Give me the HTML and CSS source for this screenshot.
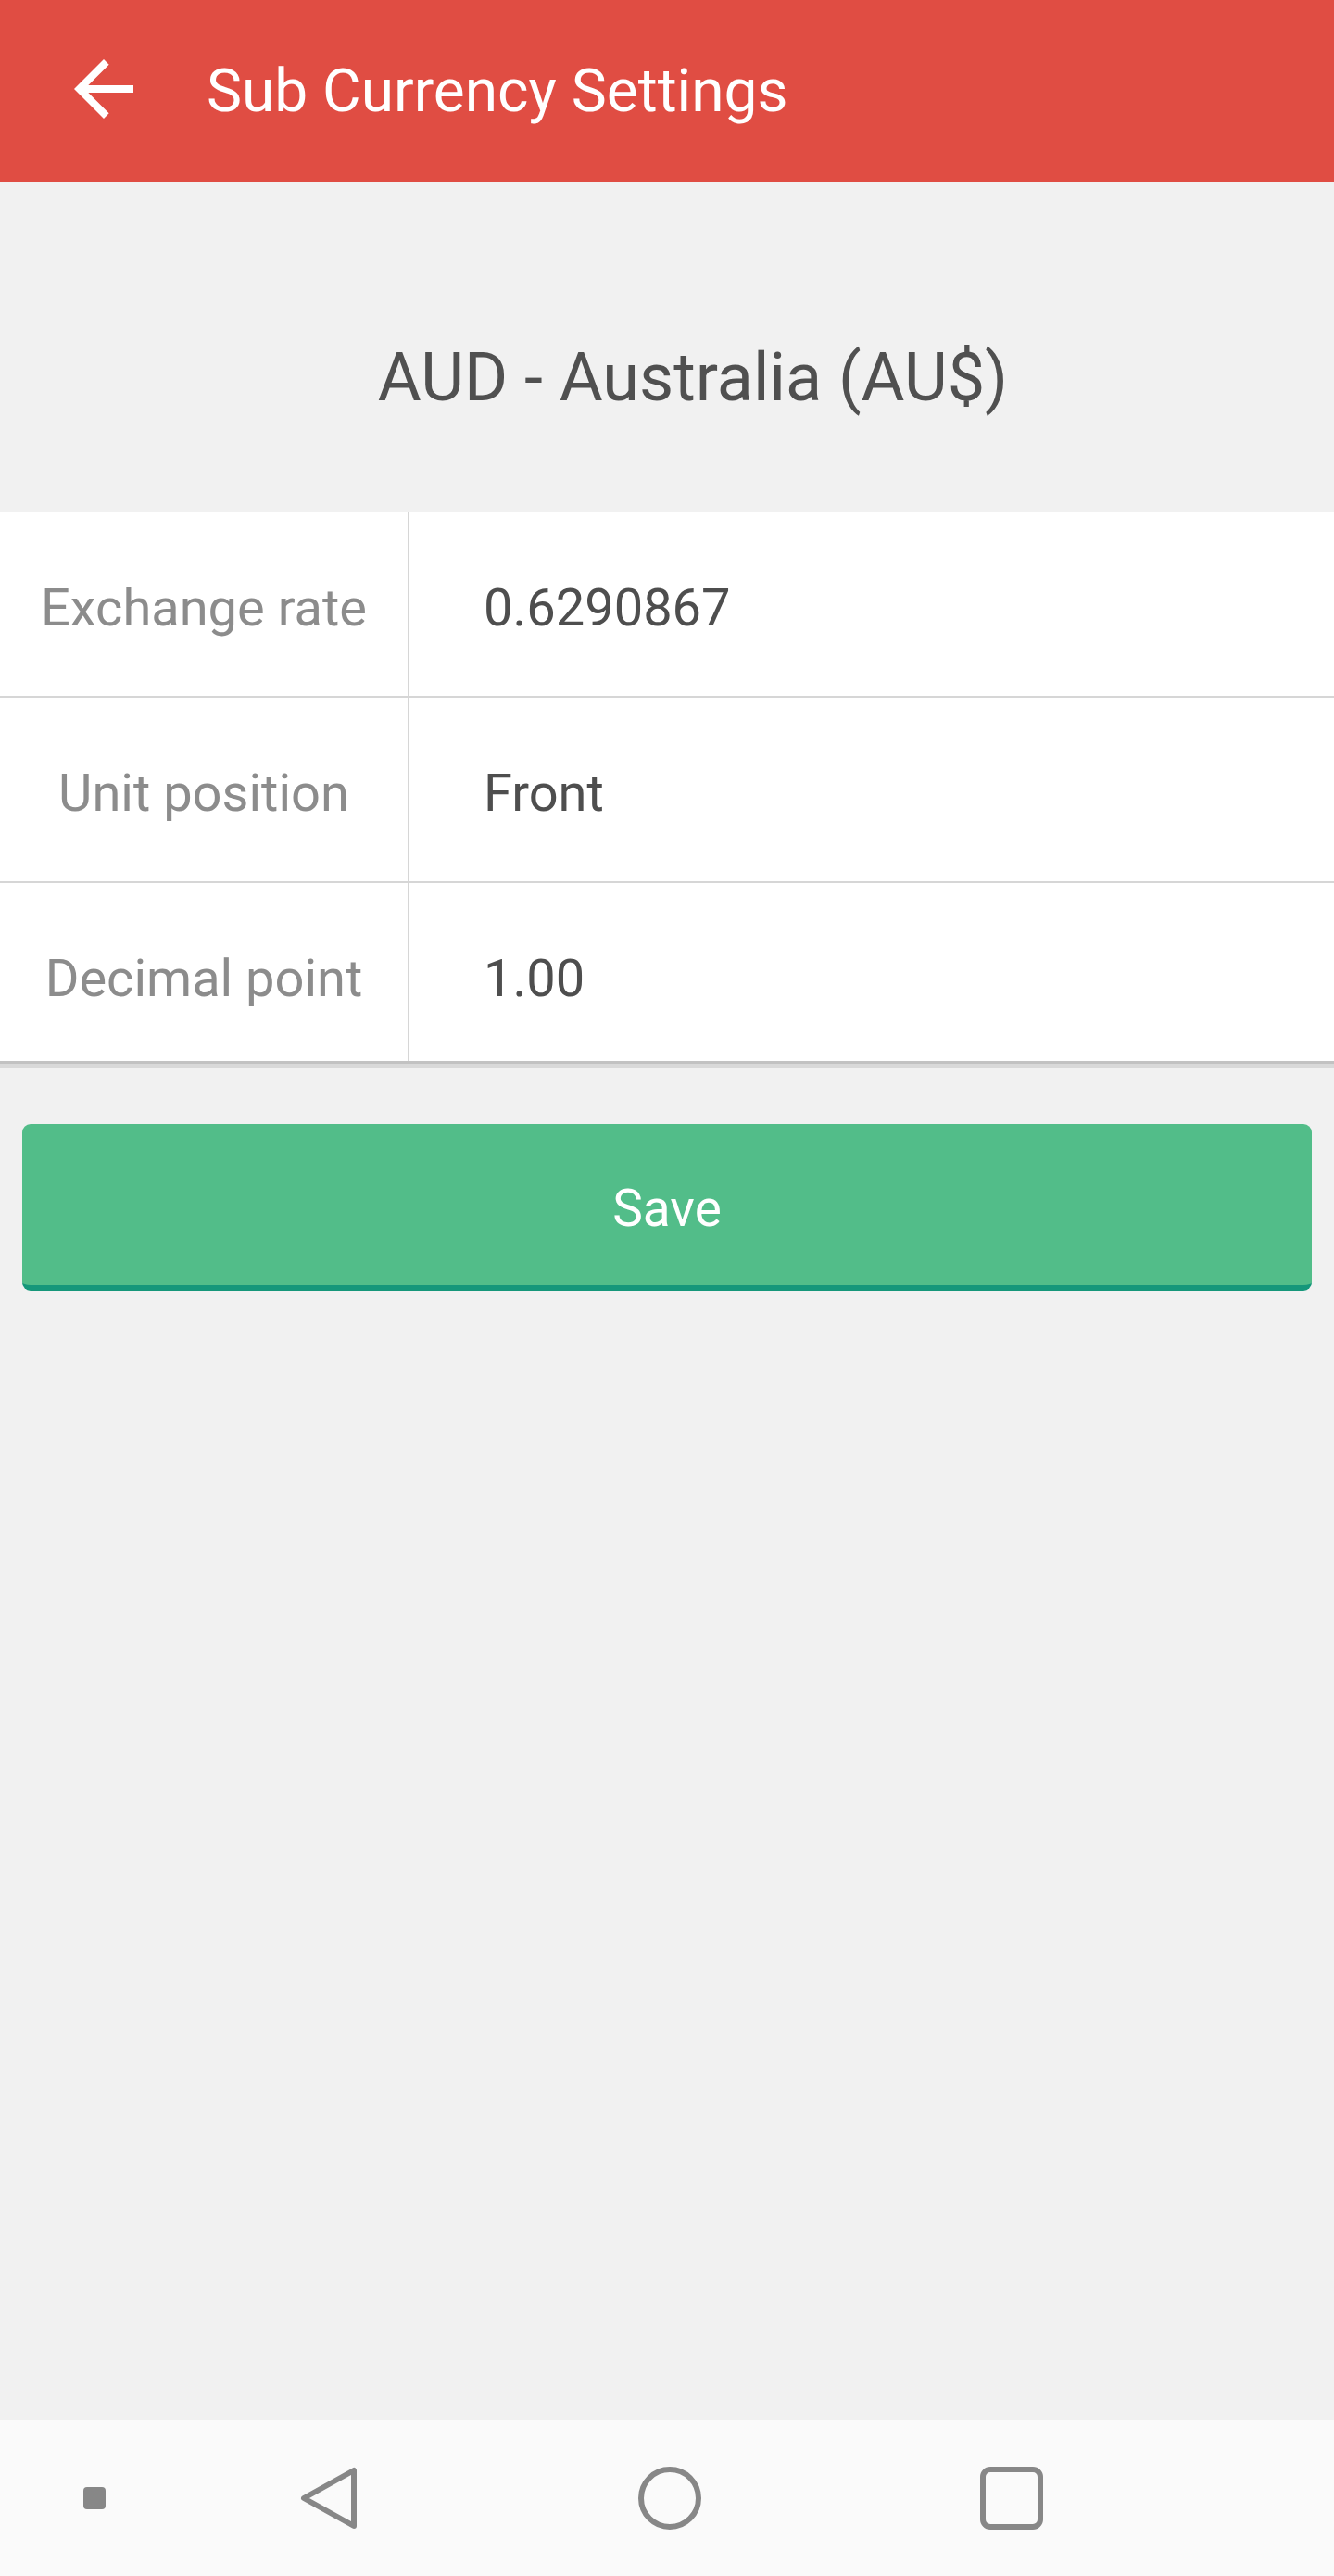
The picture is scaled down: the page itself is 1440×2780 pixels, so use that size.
FILE: index.html
```html
<!DOCTYPE html>
<html lang="en">
<head>
<meta charset="utf-8">
<title>Sub Currency Settings</title>
<link rel="stylesheet" href="styles.css">
</head>
<body>
<div class="screen">
  <header class="toolbar">
    <svg class="back-icon" viewBox="0 0 24 24" width="96" height="96" aria-hidden="true">
      <path d="M20 11H7.83l5.59-5.59L12 4l-8 8 8 8 1.41-1.41L7.83 13H20v-2z" fill="#ffffff"/>
    </svg>
    <h1 class="toolbar-title">Sub Currency Settings</h1>
  </header>

  <main class="content">
    <h2 class="currency-name">AUD - Australia (AU$)</h2>

    <div class="settings">
      <div class="row">
        <div class="label">Exchange rate</div>
        <div class="value">0.6290867</div>
      </div>
      <div class="row">
        <div class="label">Unit position</div>
        <div class="value">Front</div>
      </div>
      <div class="row row-last">
        <div class="label">Decimal point</div>
        <div class="value">1.00</div>
      </div>
    </div>

    <div class="actions">
      <button class="save-btn" type="button">Save</button>
    </div>
  </main>

  <nav class="navbar">
    <svg class="nav-dot" viewBox="0 0 24 24" width="24" height="24" aria-hidden="true">
      <rect x="0" y="0" width="24" height="24" rx="4" fill="#878787"/>
    </svg>
    <svg class="nav-back" viewBox="0 0 68 68" width="68" height="68" aria-hidden="true">
      <path d="M7 34 L61 4 L61 64 Z" fill="none" stroke="#878787" stroke-width="6" stroke-linejoin="round"/>
    </svg>
    <svg class="nav-home" viewBox="0 0 68 68" width="68" height="68" aria-hidden="true">
      <circle cx="34" cy="34" r="31" fill="none" stroke="#878787" stroke-width="6"/>
    </svg>
    <svg class="nav-recent" viewBox="0 0 68 68" width="68" height="68" aria-hidden="true">
      <rect x="3" y="3" width="62" height="62" rx="8" fill="none" stroke="#878787" stroke-width="6"/>
    </svg>
  </nav>
</div>
</body>
</html>
```

FILE: styles.css
```css
* {
  box-sizing: border-box;
}

html, body {
  margin: 0;
  padding: 0;
}

body {
  width: 1440px;
  height: 2780px;
  background: #f1f1f1;
  font-family: Roboto, "Noto Sans", "Liberation Sans", sans-serif;
  overflow: hidden;
}

.screen {
  display: flex;
  flex-direction: column;
  width: 1440px;
  height: 2780px;
}

.toolbar {
  flex: 0 0 196px;
  height: 196px;
  background: #e04d43;
  display: flex;
  align-items: center;
  padding-left: 64px;
}

.back-icon {
  display: block;
  flex: 0 0 96px;
  margin-bottom: 4px;
}

.toolbar-title {
  margin: 0 0 0 63px;
  padding-top: 2px;
  font-size: 64px;
  line-height: 64px;
  font-weight: 400;
  color: #ffffff;
}

.content {
  flex: 1 1 auto;
  display: flex;
  flex-direction: column;
}

.currency-name {
  margin: 0;
  padding: 176px 0 109px 56px;
  text-align: center;
  font-size: 72px;
  line-height: 72px;
  font-weight: 400;
  color: #505050;
}

.settings {
  background: #ffffff;
  border-bottom: 3px solid #c2c2c2;
  box-shadow: 0 5px 0 #d9d9d9;
}

.row {
  display: flex;
  height: 200px;
  border-bottom: 2px solid #d6d6d6;
}

.row-last {
  height: 192px;
  border-bottom: none;
}

.label {
  flex: 0 0 442px;
  border-right: 2px solid #d6d6d6;
  display: flex;
  align-items: center;
  justify-content: center;
  padding-top: 8px;
  font-size: 56px;
  line-height: 56px;
  color: #8c8c8c;
}

.value {
  flex: 1 1 auto;
  display: flex;
  align-items: center;
  padding: 8px 0 0 80px;
  font-size: 56px;
  line-height: 56px;
  color: #4e4e4e;
}

.row-last .label,
.row-last .value {
  padding-top: 14px;
}

.actions {
  padding: 65px 24px 0 24px;
}

.save-btn {
  display: block;
  width: 100%;
  height: 180px;
  margin: 0;
  padding: 8px 0 0 0;
  border: none;
  border-bottom: 6px solid #15977a;
  border-radius: 9px;
  background: #52bd89;
  color: #ffffff;
  font-family: Roboto, "Noto Sans", "Liberation Sans", sans-serif;
  font-size: 55px;
  line-height: 55px;
  font-weight: 400;
}

.navbar {
  flex: 0 0 168px;
  height: 168px;
  background: #fafafa;
  display: flex;
  align-items: center;
}

.navbar svg {
  display: block;
}

.nav-dot {
  margin-left: 90px;
}

.nav-back {
  margin-left: 207px;
}

.nav-home {
  margin-left: 300px;
}

.nav-recent {
  margin-left: 301px;
}
```
